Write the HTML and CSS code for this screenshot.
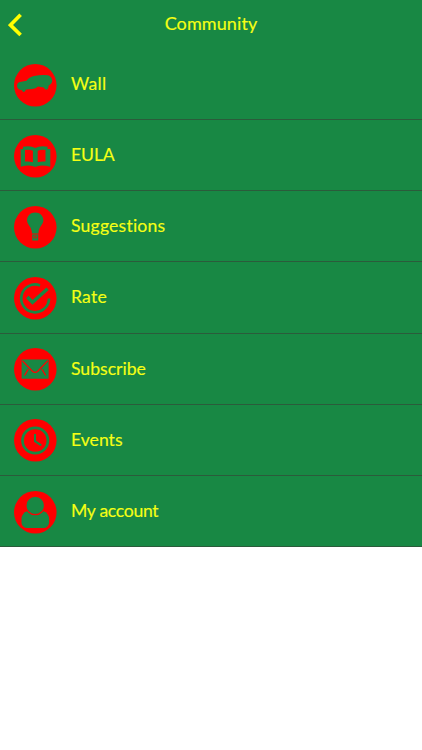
FILE: index.html
```
<!DOCTYPE html>
<html lang="en">
<head>
<meta charset="utf-8">
<meta name="viewport" content="width=device-width, initial-scale=1">
<title>Community</title>
<link rel="stylesheet" href="styles.css">
</head>
<body>
<header class="bar">
  <a class="back" aria-label="Back"><svg viewBox="0 0 14 24"><path d="M12.6 1.8 2.5 12l10.1 10"/></svg></a>
  <h1 class="title">Community</h1>
</header>
<ul class="menu">
  <li class="row"><svg class="icon" viewBox="0 0 43 43"><circle class="disc" cx="21.3" cy="21.3" r="21.3"/><path d="M3 22Q3 18.5 6 18L12.5 16.7Q15 13 20 12Q28 10.5 34 11.3Q37.5 12.5 38.2 16Q38.5 19.5 34.5 21.8Q34.5 25.5 32.5 25.7Q30.5 25.5 29.8 23.6L24 22.6Q22 24.8 18 25L12 25.6Q11 28.5 9 27.8L8 26.2Q3.5 26 3 22Z"/></svg><span class="label wall">Wall</span></li>
  <li class="row"><svg class="icon" viewBox="0 0 43 43"><circle class="disc" cx="21.3" cy="21.3" r="21.3"/><path fill-rule="evenodd" d="M6.7 14H9V11.8Q16.5 10.3 21.3 13Q26 10.3 33.5 11.8V14H36.3V31.7Q28 29.5 23.4 31.2Q21.3 32.3 19.2 31.2Q14.5 29.5 6.7 31.7ZM11 15V26.6Q15 26 18.9 27.2V15.7Q15 14 11 15ZM23.7 15.7V27.2Q27.5 26 31.5 26.6V15Q27.5 14 23.7 15.7Z"/></svg><span class="label eula">EULA</span></li>
  <li class="row"><svg class="icon" viewBox="0 0 43 43"><circle class="disc" cx="21.3" cy="21.3" r="21.3"/><path d="M21.2 6.4C16.4 6.4 13 9.9 13 14.3C13 18.7 17.8 20.5 18 27.5H24.4C24.6 20.5 29.4 18.7 29.4 14.3C29.4 9.9 26 6.4 21.2 6.4ZM18.3 28.4H24.2V34.5H18.3Z"/><path class="thin" d="M19.7 30H22.8V32H19.7Z"/></svg><span class="label suggestions">Suggestions</span></li>
  <li class="row"><svg class="icon" viewBox="0 0 43 43"><circle class="disc" cx="21.3" cy="21.3" r="21.3"/><path class="ring" d="M26 8.4A13.9 13.9 0 1 0 35 21.5"/><path class="tick" d="M13.3 20 18.5 25.3 33.6 11.8"/></svg><span class="label rate">Rate</span></li>
  <li class="row"><svg class="icon" viewBox="0 0 43 43"><circle class="disc" cx="21.3" cy="21.3" r="21.3"/><rect x="7.6" y="11.4" width="27" height="19.4" rx=".8"/><path class="fold" d="M8.3 12.6 18.2 23Q21.1 25.8 24 23L33.9 12.6M10.5 27.5 14.3 21.2M31.7 27.5 27.9 21.2"/></svg><span class="label subscribe">Subscribe</span></li>
  <li class="row"><svg class="icon" viewBox="0 0 43 43"><circle class="disc" cx="21.3" cy="21.3" r="21.3"/><circle class="ring" cx="21.2" cy="21.5" r="12.7"/><path class="hands" d="M21 15V22.2L27.3 26.3"/></svg><span class="label events">Events</span></li>
  <li class="row"><svg class="icon" viewBox="0 0 43 43"><circle class="disc" cx="21.3" cy="21.3" r="21.3"/><path d="M13.5 20Q7.5 22 7.5 28.5V32Q8 35.5 12 37H30.6Q34.6 35.5 35.1 32V28.5Q35.1 22 29 20Z"/><circle class="head" cx="21.2" cy="14.4" r="9.3"/></svg><span class="label account">My account</span></li>
</ul>
</body>
</html>
```

FILE: styles.css
```
* {
  box-sizing: border-box;
}

body {
  margin: 0;
  background: #fff;
  color: #f5ff14;
  font-family: Lato, "Open Sans", sans-serif;
  font-size: 17.6px;
  font-variant-ligatures: none;
  -webkit-text-stroke: 0.15px #f5ff14;
}

.bar {
  display: grid;
  grid-template-columns: 44px 1fr 44px;
  align-items: center;
  height: 49px;
  background: #188844;
}

.back {
  display: flex;
  padding-left: 8px;
}

.back svg {
  width: 14px;
  height: 24px;
  fill: none;
  stroke: #ff0;
  stroke-width: 3.7;
}

.title {
  margin: 0;
  text-align: center;
  font-size: 18px;
  font-weight: 400;
  line-height: 46px;
  padding-bottom: 3px;
  letter-spacing: 0.1px;
}

.menu {
  margin: 0;
  padding: 0;
  list-style: none;
  background: #188844;
}

.row {
  display: flex;
  align-items: center;
  gap: 14px;
  height: 71.13px;
  padding: 2.6px 14px 0;
  border-bottom: 1px solid #2b5b3b;
}

.icon {
  flex: none;
  width: 43px;
  height: 43px;
  fill: #188844;
}

.disc {
  fill: #f00;
}

.label {
  position: relative;
  top: -1.8px;
  white-space: nowrap;
}

.wall {
  letter-spacing: 0.3px;
}

.eula {
  letter-spacing: -0.1px;
}

.suggestions {
  letter-spacing: 0.2px;
}

.rate {
  letter-spacing: 0.2px;
}

.account {
  letter-spacing: -0.3px;
}

.ring,
.tick {
  fill: none;
  stroke: #188844;
  stroke-width: 2.7;
}

.tick {
  stroke-width: 3.4;
}

.thin,
.fold {
  fill: none;
  stroke: #f00;
  stroke-width: 0.7;
}

.fold {
  stroke-width: 1.3;
}

.hands {
  fill: none;
  stroke: #188844;
  stroke-width: 2;
}

.head {
  stroke: #f00;
  stroke-width: 1.2;
}
```
